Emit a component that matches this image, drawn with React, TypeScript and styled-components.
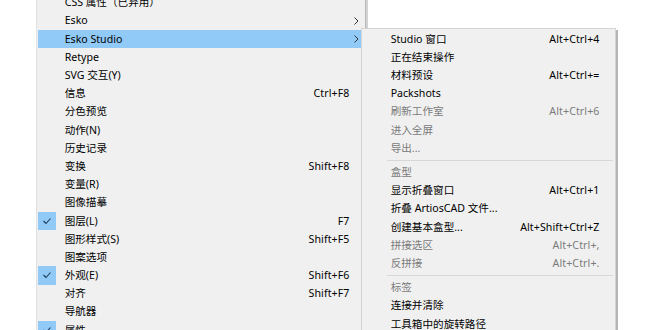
import React from "react";
import styled, { createGlobalStyle, css } from "styled-components";

const Global = createGlobalStyle`
  html, body { margin: 0; padding: 0; background: #ffffff; }
  body { width: 665px; height: 330px; overflow: hidden; }
  #root { width: 665px; height: 330px; }
`;

const ROW_H = 18.2;

const Stage = styled.div`
  position: relative;
  width: 665px;
  height: 330px;
  overflow: hidden;
  display: flex;
  align-items: flex-start;
  font-family: "Noto Sans", "Noto Sans CJK SC", sans-serif;
  font-size: 10.6px;
  color: #000;
`;

const MainMenu = styled.div`
  margin-left: 36px;
  margin-top: -7.5px;
  width: 327px;
  padding: 1px 0 1px 1px;
  background: #f0f0f0;
  border-left: 1px solid #e0e0e0;
  border-right: 1px solid #b9b9b9;
  box-shadow: 2px 0 0 #d2d2d2;
  display: flex;
  flex-direction: column;
`;

const SubMenu = styled.div`
  position: absolute;
  left: 361px;
  top: 27.5px;
  width: 253px;
  padding: 1.4px 0 2px 0;
  background: #f0f0f0;
  border: 1px solid #d4d4d4;
  box-shadow: 2px 2px 0 #b5b5b5;
  display: flex;
  flex-direction: column;
`;

const Row = styled.div<{ $hl?: boolean; $pl: number; $pr: number }>`
  position: relative;
  height: ${ROW_H}px;
  display: flex;
  align-items: center;
  padding-left: ${(p) => p.$pl}px;
  padding-right: ${(p) => p.$pr}px;
  white-space: nowrap;
  line-height: 1;
  ${(p) =>
    p.$hl &&
    css`
      background: #91c9f7;
    `}
`;

const Label = styled.span<{ $dim?: boolean }>`
  flex: 1;
  color: ${(p) => (p.$dim ? "#7b7b7b" : "#000")};
`;

const Shortcut = styled.span<{ $dim?: boolean }>`
  color: ${(p) => (p.$dim ? "#7b7b7b" : "#000")};
  letter-spacing: 0.1px;
`;

const Arrow = styled.span`
  position: absolute;
  right: 6px;
  top: 0;
  height: 100%;
  display: flex;
  align-items: center;
`;

const CheckBox = styled.span`
  position: absolute;
  left: 0;
  top: 0;
  width: 18px;
  height: 100%;
  background: #91c9f7;
  display: flex;
  align-items: center;
  justify-content: center;
`;

const Separator = styled.div`
  height: 6px;
  display: flex;
  align-items: center;
  padding-left: 25px;
  padding-right: 2px;
  &::after {
    content: "";
    flex: 1;
    height: 1px;
    background: #d7d7d7;
  }
`;

type Item = {
  label?: string;
  shortcut?: string;
  sub?: boolean;
  hl?: boolean;
  checked?: boolean;
  dim?: boolean;
  sep?: boolean;
};

const mainItems: Item[] = [
  { label: "CSS 属性（已弃用）" },
  { label: "Esko", sub: true },
  { label: "Esko Studio", sub: true, hl: true },
  { label: "Retype" },
  { label: "SVG 交互(Y)" },
  { label: "信息", shortcut: "Ctrl+F8" },
  { label: "分色预览" },
  { label: "动作(N)" },
  { label: "历史记录" },
  { label: "变换", shortcut: "Shift+F8" },
  { label: "变量(R)" },
  { label: "图像描摹" },
  { label: "图层(L)", shortcut: "F7", checked: true },
  { label: "图形样式(S)", shortcut: "Shift+F5" },
  { label: "图案选项" },
  { label: "外观(E)", shortcut: "Shift+F6", checked: true },
  { label: "对齐", shortcut: "Shift+F7" },
  { label: "导航器" },
  { label: "属性", checked: true },
];

const subItems: Item[] = [
  { label: "Studio 窗口", shortcut: "Alt+Ctrl+4" },
  { label: "正在结束操作" },
  { label: "材料预设", shortcut: "Alt+Ctrl+=" },
  { label: "Packshots" },
  { label: "刷新工作室", shortcut: "Alt+Ctrl+6", dim: true },
  { label: "进入全屏", dim: true },
  { label: "导出...", dim: true },
  { sep: true },
  { label: "盒型", dim: true },
  { label: "显示折叠窗口", shortcut: "Alt+Ctrl+1" },
  { label: "折叠 ArtiosCAD 文件..." },
  { label: "创建基本盒型...", shortcut: "Alt+Shift+Ctrl+Z" },
  { label: "拼接选区", shortcut: "Alt+Ctrl+,", dim: true },
  { label: "反拼接", shortcut: "Alt+Ctrl+.", dim: true },
  { sep: true },
  { label: "标签", dim: true },
  { label: "连接并清除" },
  { label: "工具箱中的旋转路径" },
];

const Chevron = () => (
  <svg width="5" height="8" viewBox="0 0 5 8">
    <polyline points="0.5,0.5 4,4 0.5,7.5" fill="none" stroke="#333" strokeWidth="1" />
  </svg>
);

const Check = () => (
  <svg width="10" height="8" viewBox="0 0 10 8">
    <polyline points="1.5,4 4,6.5 8.5,1.5" fill="none" stroke="#1f3a5a" strokeWidth="1.1" />
  </svg>
);

const MenuList = ({ items, pl, pr }: { items: Item[]; pl: number; pr: number }) => (
  <>
    {items.map((it, i) =>
      it.sep ? (
        <Separator key={i} />
      ) : (
        <Row key={i} $hl={it.hl} $pl={pl} $pr={pr}>
          {it.checked && (
            <CheckBox>
              <Check />
            </CheckBox>
          )}
          <Label $dim={it.dim}>{it.label}</Label>
          {it.shortcut && <Shortcut $dim={it.dim}>{it.shortcut}</Shortcut>}
          {it.sub && (
            <Arrow>
              <Chevron />
            </Arrow>
          )}
        </Row>
      )
    )}
  </>
);

export default function App() {
  return (
    <>
      <Global />
      <Stage>
        <MainMenu>
          <MenuList items={mainItems} pl={26.7} pr={15.5} />
        </MainMenu>
        <SubMenu>
          <MenuList items={subItems} pl={28.7} pr={15.5} />
        </SubMenu>
      </Stage>
    </>
  );
}
